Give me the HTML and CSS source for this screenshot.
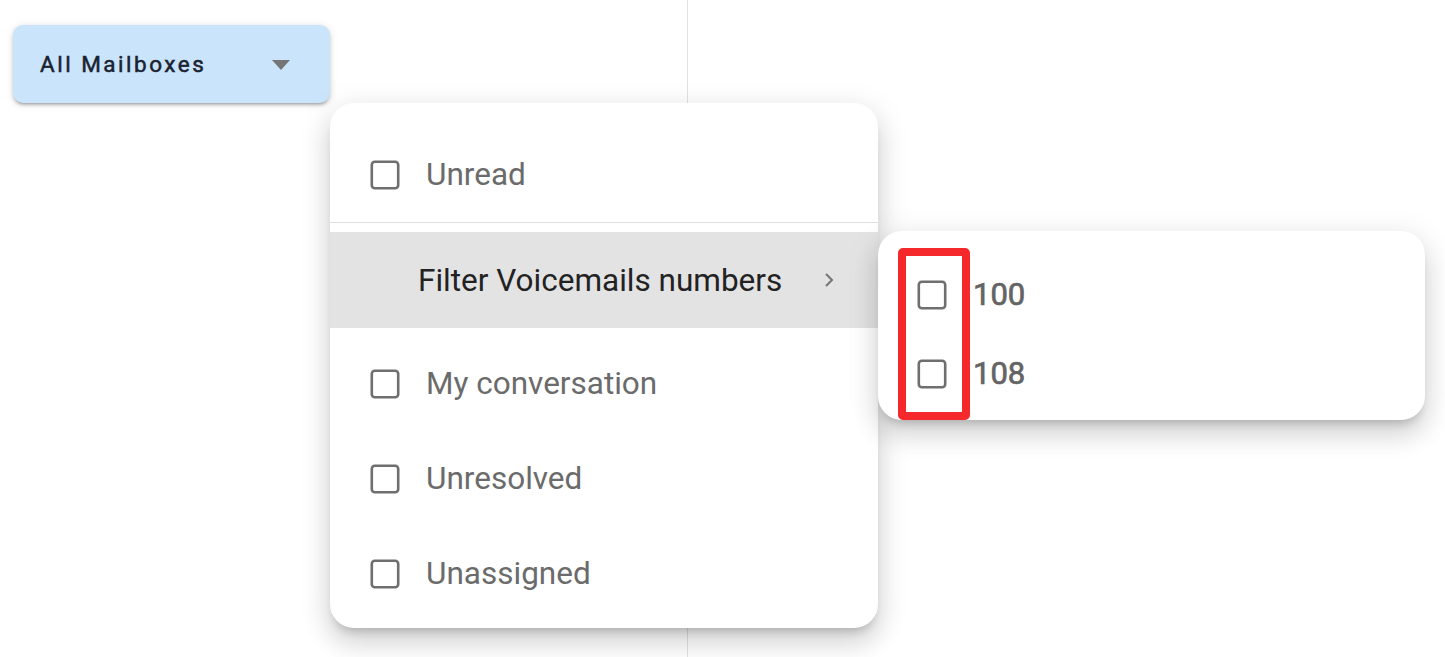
FILE: index.html
```html
<!DOCTYPE html>
<html lang="en">
<head>
<meta charset="utf-8">
<title>Mailbox filter</title>
<link rel="stylesheet" href="styles.css">
</head>
<body>
<div class="page">
  <aside class="left">
    <button class="mailbox-btn">
      <span class="mailbox-label">All Mailboxes</span>
      <svg class="caret" width="18" height="10" viewBox="0 0 18 10"><path d="M0 0 L18 0 L9 10 Z" fill="#757575"/></svg>
    </button>
  </aside>
  <main class="right"></main>
</div>

<div class="menu">
  <div class="item first">
    <svg class="cb" width="30" height="30" viewBox="0 0 30 30"><rect x="1.8" y="1.8" width="26.4" height="26.4" rx="3" fill="none" stroke="#6f6f6f" stroke-width="2.6"/></svg>
    <span class="label">Unread</span>
  </div>
  <div class="divider"></div>
  <div class="item sub active">
    <span class="label">Filter Voicemails numbers</span>
    <svg class="chev" width="10" height="16" viewBox="0 0 10 16"><path d="M2 2 L8 8 L2 14" fill="none" stroke="#757575" stroke-width="2"/></svg>
  </div>
  <div class="item">
    <svg class="cb" width="30" height="30" viewBox="0 0 30 30"><rect x="1.8" y="1.8" width="26.4" height="26.4" rx="3" fill="none" stroke="#6f6f6f" stroke-width="2.6"/></svg>
    <span class="label">My conversation</span>
  </div>
  <div class="item">
    <svg class="cb" width="30" height="30" viewBox="0 0 30 30"><rect x="1.8" y="1.8" width="26.4" height="26.4" rx="3" fill="none" stroke="#6f6f6f" stroke-width="2.6"/></svg>
    <span class="label">Unresolved</span>
  </div>
  <div class="item">
    <svg class="cb" width="30" height="30" viewBox="0 0 30 30"><rect x="1.8" y="1.8" width="26.4" height="26.4" rx="3" fill="none" stroke="#6f6f6f" stroke-width="2.6"/></svg>
    <span class="label">Unassigned</span>
  </div>
</div>

<div class="submenu">
  <div class="highlight"></div>
  <div class="subitem">
    <svg class="cb" width="30" height="30" viewBox="0 0 30 30"><rect x="1.8" y="1.8" width="26.4" height="26.4" rx="3" fill="none" stroke="#6f6f6f" stroke-width="2.6"/></svg>
    <span class="num">100</span>
  </div>
  <div class="subitem">
    <svg class="cb" width="30" height="30" viewBox="0 0 30 30"><rect x="1.8" y="1.8" width="26.4" height="26.4" rx="3" fill="none" stroke="#6f6f6f" stroke-width="2.6"/></svg>
    <span class="num">108</span>
  </div>
</div>
</body>
</html>
```

FILE: styles.css
```css
* { box-sizing: border-box; }
html, body { margin: 0; padding: 0; }
body {
  width: 1445px;
  height: 657px;
  overflow: hidden;
  background: #ffffff;
  font-family: Roboto, "Noto Sans", "Liberation Sans", sans-serif;
  position: relative;
}
.page {
  display: flex;
  height: 657px;
}
.left {
  width: 688px;
  border-right: 1px solid #e2e2e2;
  padding: 25px 0 0 13px;
}
.right { flex: 1; }
.mailbox-btn {
  display: flex;
  align-items: center;
  justify-content: space-between;
  width: 317px;
  height: 78px;
  padding: 0 40px 0 27px;
  border: none;
  border-radius: 10px;
  background: #c9e4fb;
  box-shadow: 0 3px 3px -2px rgba(0,0,0,0.25), 0 2px 4px rgba(0,0,0,0.14), 0 1px 8px rgba(0,0,0,0.10);
  font-family: Roboto, "Noto Sans", sans-serif;
  cursor: pointer;
}
.mailbox-label {
  font-size: 22.5px;
  font-weight: 400;
  -webkit-text-stroke: 0.5px #1b2230;
  letter-spacing: 2.5px;
  color: #1b2230;
}
.caret { margin-top: 2px; }

.menu {
  position: absolute;
  left: 330px;
  top: 103px;
  width: 548px;
  height: 525px;
  background: #fff;
  border-radius: 24px;
  padding: 24px 0 8px;
  box-shadow: 0 8px 10px -5px rgba(0,0,0,0.2), 0 16px 24px 2px rgba(0,0,0,0.10), 0 6px 30px 5px rgba(0,0,0,0.08);
}
.item {
  display: flex;
  align-items: center;
  height: 95px;
  padding-left: 40px;
}
.item .cb { flex: none; margin-right: 26px; }
.label {
  font-size: 31.5px;
  color: #6b6b6b;
}
.divider {
  height: 1px;
  background: #e0e0e0;
  margin-bottom: 9px;
}
.item.sub {
  height: 96px;
  margin-bottom: 8px;
  background: #e3e3e3;
  padding-left: 88px;
  padding-right: 44px;
  justify-content: space-between;
}
.item.sub .label { color: #222; }

.submenu {
  position: absolute;
  left: 878px;
  top: 231px;
  width: 547px;
  height: 189px;
  background: #fff;
  border-radius: 24px;
  padding: 24px 0 0;
  box-shadow: 0 8px 10px -5px rgba(0,0,0,0.2), 0 16px 24px 2px rgba(0,0,0,0.10), 0 6px 30px 5px rgba(0,0,0,0.08);
}
.subitem {
  display: flex;
  align-items: center;
  height: 79px;
  padding-left: 40px;
}
.subitem .cb { flex: none; margin-right: 26px; margin-left: -1px; }
.num {
  font-size: 31px;
  font-weight: 400;
  -webkit-text-stroke: 0.7px #646464;
  color: #646464;
}
.highlight {
  position: absolute;
  left: 20px;
  top: 17px;
  width: 72px;
  height: 172px;
  border: 8px solid #f5282b;
  border-radius: 5px;
}
```
